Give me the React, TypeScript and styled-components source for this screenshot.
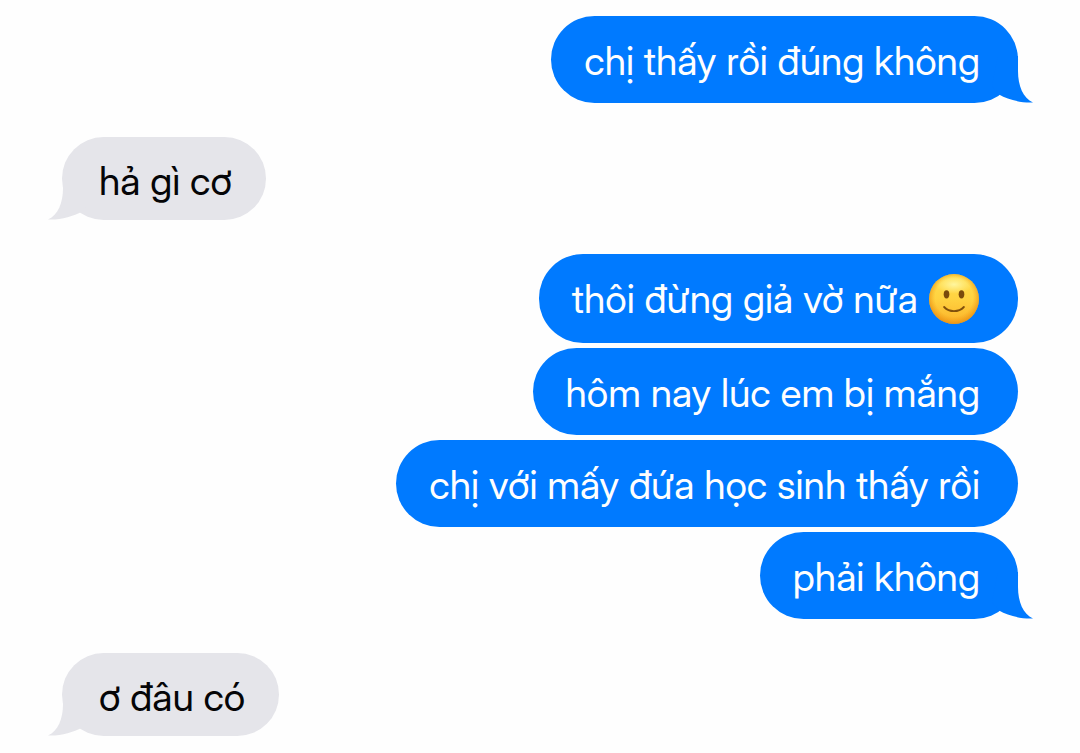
import React from "react";
import styled, { createGlobalStyle, css } from "styled-components";

type Side = "sent" | "received";

interface Message {
  text: string;
  emoji?: boolean;
}

interface Group {
  side: Side;
  messages: Message[];
}

const conversation: Group[] = [
  { side: "sent", messages: [{ text: "chị thấy rồi đúng không" }] },
  { side: "received", messages: [{ text: "hả gì cơ" }] },
  {
    side: "sent",
    messages: [
      { text: "thôi đừng giả vờ nữa", emoji: true },
      { text: "hôm nay lúc em bị mắng" },
      { text: "chị với mấy đứa học sinh thấy rồi" },
      { text: "phải không" },
    ],
  },
  { side: "received", messages: [{ text: "ơ đâu có" }] },
];

const GlobalStyle = createGlobalStyle`
  *, *::before, *::after { box-sizing: border-box; }
  body {
    margin: 0;
    background: #fefefe;
    font-family: "Inter Display", Inter, "Liberation Sans", sans-serif;
  }
`;

const Thread = styled.main`
  display: flex;
  flex-direction: column;
  gap: 34px;
  padding: 16px 62px 16px;
`;

const MessageGroup = styled.section<{ $side: Side }>`
  display: flex;
  flex-direction: column;
  gap: 5px;
  align-items: ${({ $side }) => ($side === "sent" ? "flex-end" : "flex-start")};
`;

const sentStyle = css`
  min-height: 87px;
  padding: 2px 38px 0 33px;
  background: #007aff;
  color: #fefefe;
`;

const receivedStyle = css`
  min-height: 83px;
  padding: 4px 34px 0 37px;
  background: #e5e5ea;
  color: #050507;
`;

const Bubble = styled.p<{ $side: Side; $tall?: boolean }>`
  position: relative;
  display: flex;
  align-items: center;
  gap: 10px;
  margin: 0;
  border-radius: 44px;
  font-size: 39px;
  line-height: 48px;
  ${({ $side }) => ($side === "sent" ? sentStyle : receivedStyle)}
  ${({ $tall }) => $tall && "min-height: 89px; padding-top: 0;"}
`;

const TailShape = styled.svg<{ $side: Side }>`
  position: absolute;
  bottom: 0;
  width: 43px;
  height: 47px;
  ${({ $side }) =>
    $side === "sent"
      ? "right: -15px; fill: #007aff;"
      : "left: -14px; fill: #e5e5ea; transform: scaleX(-1);"}
`;

const EmojiFace = styled.svg`
  flex: none;
  width: 52px;
  height: 52px;
`;

function Tail({ side }: { side: Side }) {
  return (
    <TailShape $side={side} viewBox="0 0 43 47" aria-hidden="true">
      <path d="M28 0V15C28 30 33 42 43 46.500C30 47 18 43.500 9 38.500L2 30L8 0Z" />
    </TailShape>
  );
}

function SmileEmoji() {
  return (
    <EmojiFace viewBox="0 0 50 50" role="img" aria-label="🙂">
      <defs>
        <linearGradient id="face" x1="0" y1="0" x2="0" y2="1">
          <stop offset="0" stopColor="#ffe04f" />
          <stop offset="0.5" stopColor="#ffd240" />
          <stop offset="1" stopColor="#fbb32a" />
        </linearGradient>
        <radialGradient id="rim" cx="0.5" cy="0.47" r="0.54">
          <stop offset="0.7" stopColor="#f29a12" stopOpacity="0" />
          <stop offset="1" stopColor="#e58a10" stopOpacity="0.85" />
        </radialGradient>
        <radialGradient id="shine" cx="0.5" cy="0.5" r="0.5">
          <stop offset="0" stopColor="#fff9a8" stopOpacity="0.9" />
          <stop offset="1" stopColor="#fff6a0" stopOpacity="0" />
        </radialGradient>
      </defs>
      <circle cx="25" cy="25" r="24" fill="url(#face)" />
      <circle cx="25" cy="25" r="24" fill="url(#rim)" />
      <ellipse cx="25" cy="11" rx="18" ry="9" fill="url(#shine)" />
      <ellipse cx="17.800" cy="20.500" rx="2.700" ry="4" fill="#7a4a0c" />
      <ellipse cx="32.200" cy="20.500" rx="2.700" ry="4" fill="#7a4a0c" />
      <path
        d="M15.500 32.700C20.500 38 29.500 38 34.500 32.700"
        fill="none"
        stroke="#80500c"
        strokeWidth="1.800"
        strokeLinecap="round"
      />
    </EmojiFace>
  );
}

export default function App() {
  return (
    <>
      <GlobalStyle />
      <Thread>
        {conversation.map((group, g) => (
          <MessageGroup key={g} $side={group.side}>
            {group.messages.map((message, m) => (
              <Bubble key={m} $side={group.side} $tall={message.emoji}>
                {m === group.messages.length - 1 && <Tail side={group.side} />}
                <span>{message.text}</span>
                {message.emoji && <SmileEmoji />}
              </Bubble>
            ))}
          </MessageGroup>
        ))}
      </Thread>
    </>
  );
}
